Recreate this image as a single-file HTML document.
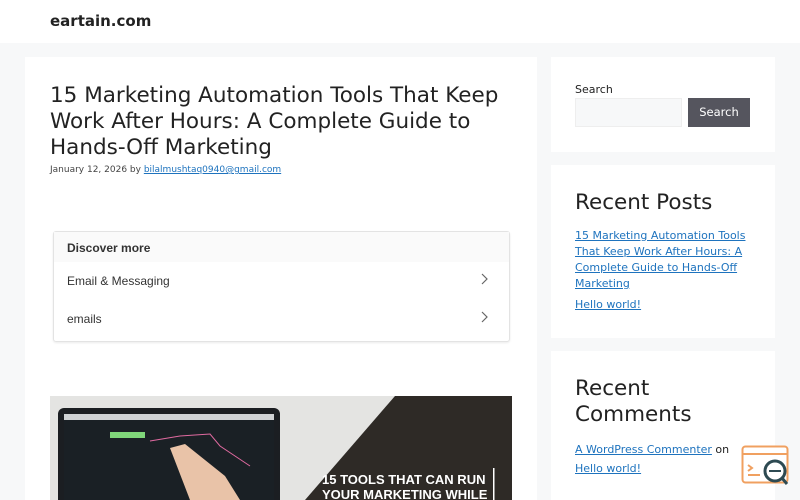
<!DOCTYPE html>
<html><head><style>
body{margin:0;width:800px;height:500px;overflow:hidden;background:#f7f8f9;font-family:"DejaVu Sans","Liberation Sans",sans-serif;color:#222;}
.hdr{position:absolute;left:0;top:0;width:800px;height:43px;background:#fff;}
.logo{position:absolute;left:50px;top:12px;font-size:15px;font-weight:bold;color:#222;}
.main{position:absolute;left:25px;top:57px;width:512px;height:443px;background:#fff;}
h1{position:absolute;left:25px;top:26px;margin:0;font-size:21.5px;font-weight:normal;line-height:26px;width:470px;color:#222;}
.meta{position:absolute;left:25px;top:108px;font-size:9px;color:#444;}
a{color:#1e73be;text-decoration:underline;}
.disc{position:absolute;left:28px;top:174px;width:455px;height:109px;border:1px solid #e3e3e3;border-radius:3px;box-shadow:0 1px 2px rgba(0,0,0,.08);font-family:"Liberation Sans",sans-serif;}
.disc .h{height:30px;background:#fafafa;font-size:12px;font-weight:bold;color:#333;padding:9px 0 0 13px;box-sizing:border-box;}
.disc .r{height:38px;font-size:12px;color:#333;padding:12px 0 0 13px;box-sizing:border-box;position:relative;}
.disc .r svg{position:absolute;right:20px;top:11px;}
.img{position:absolute;left:25px;top:339px;width:462px;height:104px;background:#e6e6e4;overflow:hidden;}
.side{position:absolute;left:551px;width:224px;background:#fff;}
.lbl{position:absolute;left:24px;font-size:11px;color:#222;}
.inp{position:absolute;left:24px;top:41px;width:107px;height:29px;background:#f7f8f9;border:1px solid #eee;box-sizing:border-box;}
.btn{position:absolute;left:137px;top:41px;width:62px;height:29px;background:#55555e;color:#fff;font-size:11.5px;text-align:center;line-height:29px;}
h2{position:absolute;left:24px;margin:0;font-size:21.5px;font-weight:normal;line-height:26px;color:#222;}
.lk{position:absolute;left:24px;font-size:11px;line-height:16px;width:180px;}
</style></head><body>
<div class="hdr"><div class="logo">eartain.com</div></div>
<div class="main">
<h1>15 Marketing Automation Tools That Keep Work After Hours: A Complete Guide to Hands-Off Marketing</h1>
<div class="meta">January 12, 2026 by <a>bilalmushtaq0940@gmail.com</a></div>
<div class="disc">
<div class="h">Discover more</div>
<div class="r">Email &amp; Messaging<svg width="8" height="12" viewBox="0 0 8 12"><path d="M1 1l5 5-5 5" fill="none" stroke="#666" stroke-width="1.2"/></svg></div>
<div class="r">emails<svg width="8" height="12" viewBox="0 0 8 12"><path d="M1 1l5 5-5 5" fill="none" stroke="#666" stroke-width="1.2"/></svg></div>
</div>
<div class="img">
<svg width="462" height="104" viewBox="0 0 462 104">
<rect width="462" height="104" fill="#e4e4e2"/>
<polygon points="345,0 462,0 462,104 255,104" fill="#2e2a26"/>
<rect x="8" y="12" width="222" height="100" rx="6" fill="#1b1e22"/>
<rect x="14" y="18" width="210" height="92" fill="#1a2025"/>
<rect x="14" y="18" width="210" height="6" fill="#cfd2d4"/>
<rect x="60" y="36" width="35" height="6" fill="#7fd67a"/>
<polyline points="100,45 130,40 160,38 170,50 185,60 200,70" fill="none" stroke="#e06aa0" stroke-width="1"/>
<path d="M120,52 L135,48 L175,80 L190,104 L140,104 Z" fill="#e9c3a8"/>
<text x="272" y="88" font-family="Liberation Sans" font-weight="bold" font-size="13" fill="#fff">15 TOOLS THAT CAN RUN</text>
<text x="272" y="103" font-family="Liberation Sans" font-weight="bold" font-size="13" fill="#fff">YOUR MARKETING WHILE</text>
<rect x="443" y="72" width="1.5" height="32" fill="#fff"/>
</svg>
</div>
</div>
<div class="side" style="top:57px;height:95px;">
<div class="lbl" style="top:26px;">Search</div>
<div class="inp"></div><div class="btn">Search</div>
</div>
<div class="side" style="top:165px;height:173px;">
<h2 style="top:25px;">Recent Posts</h2>
<div class="lk" style="top:63px;"><a>15 Marketing Automation Tools That Keep Work After Hours: A Complete Guide to Hands-Off Marketing </a></div>
<div class="lk" style="top:132px;"><a>Hello world!</a></div>
</div>
<div class="side" style="top:351px;height:149px;">
<h2 style="top:25px;">Recent<br>Comments</h2>
<div class="lk" style="top:91px;"><a>A WordPress Commenter</a> on</div>
<div class="lk" style="top:110px;"><a>Hello world!</a></div>
</div>
<svg style="position:absolute;left:741px;top:445px" width="50" height="44" viewBox="0 0 50 44">
<rect x="1.5" y="1.5" width="45" height="36" rx="3" fill="#fff" stroke="#f0a060" stroke-width="2"/>
<line x1="1.5" y1="9" x2="46.5" y2="9" stroke="#f0a060" stroke-width="2"/>
<path d="M7 20l4 3-4 3M7 30h12" stroke="#f0a060" stroke-width="2" fill="none"/>
<circle cx="34" cy="26" r="10" fill="#fff" stroke="#2d4a52" stroke-width="3"/>
<line x1="28" y1="26" x2="40" y2="26" stroke="#2d4a52" stroke-width="2"/>
<line x1="41" y1="33" x2="46" y2="39" stroke="#2d4a52" stroke-width="3"/>
</svg>
</body></html>
